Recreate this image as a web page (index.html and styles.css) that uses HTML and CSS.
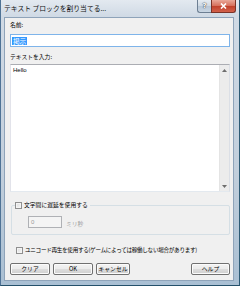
FILE: index.html
```html
<!DOCTYPE html>
<html lang="ja">
<head>
<meta charset="utf-8">
<link rel="stylesheet" href="styles.css">
</head>
<body>
<div class="window">
  <div class="titlebar">
    <span class="title">テキスト ブロックを割り当てる...</span>
    <div class="caption">
      <span class="cap-btn help">?</span>
      <span class="cap-btn close"><svg width="7" height="6" viewBox="0 0 7 6"><path d="M1 0.5 L6 5.5 M6 0.5 L1 5.5" stroke="#fff" stroke-width="1.6"/></svg></span>
    </div>
  </div>
  <div class="client">
    <div class="lbl lbl-name">名前:</div>
    <div class="input name-input"><span class="sel">掲示</span></div>
    <div class="lbl lbl-text">テキストを入力:</div>
    <div class="textarea">
      <div class="ta-text">Hello</div>
      <div class="scrollbar">
        <svg width="5" height="3" viewBox="0 0 5 3"><path d="M0 3 L2.5 0 L5 3Z" fill="#6d6d6d"/></svg>
        <svg width="5" height="3" viewBox="0 0 5 3"><path d="M0 0 L2.5 3 L5 0Z" fill="#6d6d6d"/></svg>
      </div>
    </div>
    <div class="group">
      <div class="legend"><span class="checkbox"></span><span>文字間に遅延を使用する</span></div>
      <div class="delay-row">
        <div class="input disabled">0</div>
        <span class="unit">ミリ秒</span>
      </div>
    </div>
    <div class="check-row"><span class="checkbox"></span><span>ユニコード再生を使用する(ゲームによっては稼働しない場合があります)</span></div>
    <div class="buttons">
      <span class="btn w40">クリア</span>
      <span class="btn w40">OK</span>
      <span class="btn w34">キャンセル</span>
      <span class="spacer"></span>
      <span class="btn w38">ヘルプ</span>
    </div>
  </div>
</div>
</body>
</html>
```

FILE: styles.css
```css
html, body {
  margin: 0;
  padding: 0;
}
body {
  font-family: "Noto Sans CJK JP", "Noto Sans", sans-serif;
  color: #000;
  background: #fff;
}
.window {
  width: 240px;
  height: 286px;
  box-sizing: border-box;
  display: flex;
  flex-direction: column;
  background: linear-gradient(to bottom, #e3e9f0 0, #d0dae5 16px, #c2cfdc 60%, #a9bfd3 100%);
  border-left: 1px solid #4f7396;
  border-right: 1px solid #2c5a74;
  border-bottom: 1px solid #24506a;
}
.titlebar {
  height: 17px;
  display: flex;
  align-items: flex-start;
  justify-content: space-between;
  padding-left: 3px;
  flex: none;
}
.title {
  font-size: 6.8px;
  line-height: 8px;
  margin-top: 4px;
  color: #111;
}
.caption {
  display: flex;
  margin-right: 3px;
}
.cap-btn {
  height: 13px;
  box-sizing: border-box;
  display: flex;
  align-items: center;
  justify-content: center;
  border: 1px solid #6d7f93;
  border-top: none;
}
.help {
  width: 14px;
  border-radius: 0 0 0 3px;
  background: linear-gradient(to bottom, #e6ecf2 0, #cdd8e3 50%, #b7c6d6 51%, #c9d6e3 100%);
  color: #fff;
  font-family: "DejaVu Sans", sans-serif;
  font-weight: bold;
  font-size: 7px;
  text-shadow: 0 0 1px #333, 0 0 1px #333;
  border-right: none;
}
.close {
  width: 25px;
  border-radius: 0 0 3px 0;
  background: linear-gradient(to bottom, #e9a899 0, #d56e5a 50%, #c0402a 51%, #d2614b 100%);
  border-color: #7a3328;
}
.client {
  flex: 1;
  margin: 0 5px 4px 3px;
  background: #f0f0f0;
  border: 1px solid #8ea3b9;
  padding: 0 3px 0 5px;
  display: flex;
  flex-direction: column;
}
.lbl {
  font-size: 5.8px;
  line-height: 8px;
}
.lbl-name {
  margin-top: 3px;
}
.input {
  box-sizing: border-box;
  background: #fff;
  border: 1px solid #abadb3;
  border-color: #abadb3 #e3e9ef #e3e9ef #e2e3ea;
}
.name-input {
  height: 13px;
  margin-top: 5px;
  border: 1px solid #7eb4ea;
  padding: 2px 0 0 1px;
  display: flex;
  align-items: flex-start;
}
.sel {
  background: #3399ff;
  color: #fff;
  font-size: 6.6px;
  line-height: 8px;
  padding: 0 1px;
}
.lbl-text {
  margin-top: 6px;
}
.textarea {
  margin-top: 3px;
  height: 128px;
  box-sizing: border-box;
  background: #fff;
  border: 1px solid #abadb3;
  border-color: #abadb3 #dbdfe6 #e3e9ef #e2e3ea;
  display: flex;
}
.ta-text {
  flex: 1;
  font-family: "Liberation Sans", Arial, sans-serif;
  font-size: 6px;
  line-height: 8px;
  padding: 1px 2px;
}
.scrollbar {
  width: 10px;
  background: #ececec;
  border-left: 1px solid #e4e4e4;
  display: flex;
  flex-direction: column;
  justify-content: space-between;
  align-items: center;
  padding: 4px 0 3px;
  box-sizing: border-box;
}
.scrollbar svg {
  display: block;
}
.group {
  margin: 13px 0 0 1px;
  height: 30px;
  box-sizing: border-box;
  border: 1px solid #d5dfe5;
  border-radius: 2px;
  position: relative;
  padding: 0 0 0 16px;
}
.legend {
  position: absolute;
  left: 3px;
  top: -5px;
  background: #f0f0f0;
  display: flex;
  align-items: center;
  gap: 2px;
  padding-right: 2px;
  font-size: 5.8px;
  line-height: 8px;
}
.checkbox {
  width: 7px;
  height: 7px;
  box-sizing: border-box;
  border: 1px solid #8f8f8f;
  background: linear-gradient(135deg, #dcdcdc 0, #f6f6f6 100%);
  box-shadow: inset 0 0 0 1px #f4f4f4;
  flex: none;
}
.delay-row {
  display: flex;
  align-items: flex-end;
  margin-top: 10px;
  gap: 4px;
}
.disabled {
  width: 34px;
  height: 12px;
  background: #f4f4f4;
  border: 1px solid #afb1b5;
  color: #9a9a9a;
  font-family: "Liberation Sans", Arial, sans-serif;
  font-size: 6px;
  line-height: 8px;
  padding: 1px 2px;
}
.unit {
  font-size: 5.8px;
  line-height: 8px;
  color: #9d9d9d;
}
.check-row {
  display: flex;
  align-items: center;
  gap: 2px;
  margin: 11px 0 0 6px;
  font-size: 5.6px;
  line-height: 8px;
  letter-spacing: -0.3px;
}
.buttons {
  display: flex;
  margin-top: 9px;
  gap: 3px;
}
.btn {
  height: 12px;
  box-sizing: border-box;
  border: 1px solid #707070;
  border-radius: 2px;
  background: linear-gradient(to bottom, #f3f3f3 0, #ebebeb 50%, #dddddd 51%, #cfcfcf 100%);
  box-shadow: inset 0 0 0 1px #fbfbfb;
  display: flex;
  align-items: center;
  justify-content: center;
  font-size: 5.8px;
  line-height: 8px;
}
.w40 { width: 40px; }
.w34 { width: 34px; }
.w38 { width: 39px; }
.spacer { flex: 1; }
```
